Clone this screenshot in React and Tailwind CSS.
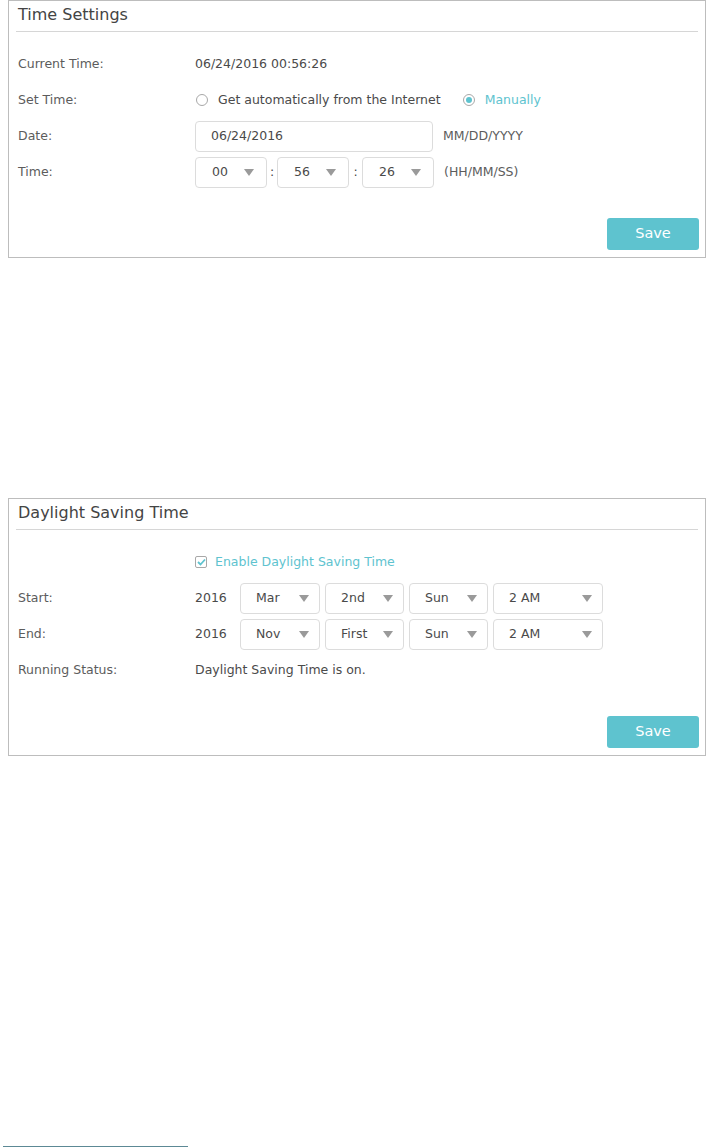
import React from "react";

const font = { fontFamily: '"DejaVu Sans", Verdana, sans-serif' };

function Caret() {
  return (
    <svg width="10" height="7" viewBox="0 0 10 7" className="shrink-0">
      <path d="M0 0 L10 0 L5 7 Z" fill="#9a9a9a" />
    </svg>
  );
}

function Select({ value, w, pl = "pl-[15px]", pr = "pr-[10px]" }) {
  return (
    <div
      className={`${w} h-[31px] border border-[#dcdcdc] rounded-[4px] flex items-center justify-between ${pl} ${pr} text-[#4a4a4a] bg-white`}
    >
      <span>{value}</span>
      <Caret />
    </div>
  );
}

function Row({ label, children }) {
  return (
    <div className="h-[36px] flex items-center">
      <div className="w-[177px] shrink-0 text-[#5c5c5c]">{label}</div>
      <div className="flex items-center text-[#4a4a4a]">{children}</div>
    </div>
  );
}

function Panel({ title, children }) {
  return (
    <div className="ml-[8px] w-[698px] h-[258px] border border-[#bdbdbd] flex flex-col">
      <div className="mx-[7px] h-[31px] border-b border-[#d6d6d6] flex items-center">
        <span className="text-[16px] text-[#444] pl-[2px] -mt-[2px]">{title}</span>
      </div>
      <div className="pl-[9px] pt-[14px] flex-1 relative">{children}</div>
      <div className="flex justify-end pr-[6px] pb-[7px]">
        <button className="w-[92px] h-[32px] rounded-[3px] bg-[#5ec3cf] text-white text-[14.5px]">
          Save
        </button>
      </div>
    </div>
  );
}

export default function App() {
  return (
    <div style={font} className="w-[706px] h-[1148px] bg-white text-[12.5px] relative">
      <Panel title="Time Settings">
        <Row label="Current Time:">06/24/2016 00:56:26</Row>
        <Row label="Set Time:">
          <span className="w-[12px] h-[12px] rounded-full border border-[#a8a8a8] mr-[10px] ml-[1px]" />
          <span className="text-[#4a4a4a]">Get automatically from the Internet</span>
          <span className="w-[12px] h-[12px] rounded-full border border-[#a8a8a8] ml-[22px] mr-[10px] flex items-center justify-center">
            <span className="w-[6px] h-[6px] rounded-full bg-[#5ec3cf]" />
          </span>
          <span className="text-[#5ec3cf]">Manually</span>
        </Row>
        <Row label="Date:">
          <div className="w-[238px] h-[31px] border border-[#dcdcdc] rounded-[4px] flex items-center pl-[15px]">
            06/24/2016
          </div>
          <span className="ml-[10px] text-[#5c5c5c]">MM/DD/YYYY</span>
        </Row>
        <Row label="Time:">
          <Select value="00" w="w-[72px]" pl="pl-[16px]" pr="pr-[12px]" />
          <span className="w-[10px] text-center">:</span>
          <Select value="56" w="w-[72px]" pl="pl-[16px]" pr="pr-[12px]" />
          <span className="w-[13px] text-center">:</span>
          <Select value="26" w="w-[72px]" pl="pl-[16px]" pr="pr-[12px]" />
          <span className="ml-[10px] text-[#5c5c5c]">(HH/MM/SS)</span>
        </Row>
      </Panel>

      <div className="h-[240px]" />

      <Panel title="Daylight Saving Time">
        <Row label="">
          <span className="w-[12px] h-[12px] rounded-[2px] border border-[#a8a8a8] mr-[8px] flex items-center justify-center">
            <svg width="9" height="8" viewBox="0 0 9 8">
              <path d="M1 4 L3.5 6.5 L8 1.5" fill="none" stroke="#5ec3cf" strokeWidth="1.8" />
            </svg>
          </span>
          <span className="text-[#5ec3cf]">Enable Daylight Saving Time</span>
        </Row>
        <Row label="Start:">
          <span className="w-[45px]">2016</span>
          <div className="flex gap-[5px]">
            <Select value="Mar" w="w-[80px]" />
            <Select value="2nd" w="w-[79px]" />
            <Select value="Sun" w="w-[79px]" />
            <Select value="2 AM" w="w-[110px]" />
          </div>
        </Row>
        <Row label="End:">
          <span className="w-[45px]">2016</span>
          <div className="flex gap-[5px]">
            <Select value="Nov" w="w-[80px]" />
            <Select value="First" w="w-[79px]" />
            <Select value="Sun" w="w-[79px]" />
            <Select value="2 AM" w="w-[110px]" />
          </div>
        </Row>
        <Row label="Running Status:">Daylight Saving Time is on.</Row>
      </Panel>

      <div className="absolute left-[3px] top-[1146px] w-[185px] h-[1px] bg-[#5c8995]" />
    </div>
  );
}
